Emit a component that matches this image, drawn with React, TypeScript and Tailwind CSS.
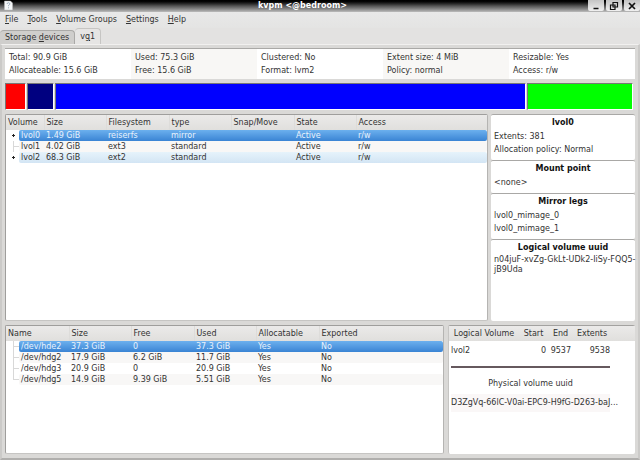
import type { ReactNode } from "react";

type TreeMark = "plus" | "tee" | "end" | "first";
type RowTone = "selected" | "hover" | "plain" | "tint";

interface TreeRow {
  mark: TreeMark;
  tone: RowTone;
  cells: string[];
}

const MENUS = [
  { key: "F", rest: "ile" },
  { key: "T", rest: "ools" },
  { key: "V", rest: "olume Groups" },
  { key: "S", rest: "ettings" },
  { key: "H", rest: "elp" },
];

const SUMMARY = [
  ["Total: 90.9 GiB", "Allocateable: 15.6 GiB"],
  ["Used: 75.3 GiB", "Free: 15.6 GiB"],
  ["Clustered: No", "Format: lvm2"],
  ["Extent size: 4 MiB", "Policy: normal"],
  ["Resizable: Yes", "Access: r/w"],
];

const SEGMENTS = [
  { label: "lvol0", size: 19, color: "bg-[#ff0000]" },
  { label: "lvol1", size: 25, color: "bg-[#000080]" },
  { label: "lvol2", size: 471, color: "bg-[#0000ff]" },
  { label: "free", size: 105, color: "bg-[#00ff00]" },
];

const VOLUME_COLUMNS = ["Volume", "Size", "Filesystem", "type", "Snap/Move", "State", "Access"];

const VOLUMES: TreeRow[] = [
  { mark: "plus", tone: "selected", cells: ["lvol0", "1.49 GiB", "reiserfs", "mirror", "", "Active", "r/w"] },
  { mark: "tee", tone: "tint", cells: ["lvol1", "4.02 GiB", "ext3", "standard", "", "Active", "r/w"] },
  { mark: "plus", tone: "hover", cells: ["lvol2", "68.3 GiB", "ext2", "standard", "", "Active", "r/w"] },
];

const DEVICE_COLUMNS = ["Name", "Size", "Free", "Used", "Allocatable", "Exported"];

const DEVICES: TreeRow[] = [
  { mark: "first", tone: "selected", cells: ["/dev/hde2", "37.3 GiB", "0", "37.3 GiB", "Yes", "No"] },
  { mark: "tee", tone: "tint", cells: ["/dev/hdg2", "17.9 GiB", "6.2 GiB", "11.7 GiB", "Yes", "No"] },
  { mark: "tee", tone: "plain", cells: ["/dev/hdg3", "20.9 GiB", "0", "20.9 GiB", "Yes", "No"] },
  { mark: "end", tone: "tint", cells: ["/dev/hdg5", "14.9 GiB", "9.39 GiB", "5.51 GiB", "Yes", "No"] },
];

function toneClass(tone: RowTone): string {
  switch (tone) {
    case "selected":
      return "bg-linear-to-b from-[#6cb0ee] to-[#3a84d4] text-[#e8f2fc]";
    case "hover":
      return "bg-linear-to-b from-[#e6f3fb] to-[#d3e5f4]";
    case "tint":
      return "bg-[#f8f7f6]";
    default:
      return "bg-white";
  }
}

function TreeBranch({ mark }: { mark: TreeMark }) {
  if (mark === "plus") {
    return (
      <button type="button" aria-label="Expand" className="h-[11px] w-[13px] shrink-0">
        <svg viewBox="0 0 13 11" className="h-[11px] w-[13px]" fill="#222" shapeRendering="crispEdges">
          <rect x="6" y="5" width="3" height="1" />
          <rect x="7" y="4" width="1" height="3" />
        </svg>
      </button>
    );
  }
  return (
    <svg viewBox="0 0 13 11" className="h-[11px] w-[13px] shrink-0" shapeRendering="crispEdges">
      <path
        d={mark === "end" ? "M7.5 0v6M7.5 5.5h5" : "M7.5 0v11M7.5 5.5h5"}
        stroke="#d8d8d8"
        strokeWidth="1"
        fill="none"
      />
    </svg>
  );
}

function TreeTable({
  label,
  columns,
  widths,
  rows,
}: {
  label: string;
  columns: string[];
  widths: string[];
  rows: TreeRow[];
}) {
  return (
    <table aria-label={label} className="w-full table-fixed border-collapse">
      <colgroup>
        {columns.map((column, i) => (
          <col key={column} className={widths[i]} />
        ))}
      </colgroup>
      <thead>
        <tr className="h-[15px] bg-linear-to-b from-[#ebeae9] to-[#e0dfdd]">
          {columns.map((column) => (
            <th key={column} className="border-r border-[#dddcda] px-0.5 text-left font-normal whitespace-nowrap last:border-r-0">
              {column}
            </th>
          ))}
        </tr>
      </thead>
      <tbody>
        {rows.map((row) => (
          <tr key={row.cells[0]} className="h-[11px]">
            {row.cells.map((cell, i) =>
              i === 0 ? (
                <td key={i} className="p-0">
                  <div className="flex">
                    <TreeBranch mark={row.mark} />
                    <span className={`grow rounded-l-xs pl-0.5 whitespace-nowrap ${toneClass(row.tone)}`}>{cell}</span>
                  </div>
                </td>
              ) : (
                <td key={i} className={`px-0.5 py-0 whitespace-nowrap last:rounded-r-xs ${toneClass(row.tone)}`}>
                  {cell}
                </td>
              ),
            )}
          </tr>
        ))}
      </tbody>
    </table>
  );
}

function InfoSection({ title, grow, children }: { title: string; grow?: boolean; children: ReactNode }) {
  return (
    <section
      className={`rounded-xs border-t border-[#a9a8a6] bg-white px-[3px] pb-1 ${grow ? "grow" : ""}`}
    >
      <h2 className="text-center leading-[15px] font-bold text-[#111]">{title}</h2>
      {children}
    </section>
  );
}

function WindowButton({ label, children }: { label: string; children: ReactNode }) {
  return (
    <button
      type="button"
      aria-label={label}
      className="flex h-[11px] w-4 items-center justify-center rounded-b-xs bg-linear-to-b from-[#c4c4c4] to-[#f0f0f0]"
    >
      <svg viewBox="0 0 10 10" className="size-2.5" fill="none" stroke="#111">
        {children}
      </svg>
    </button>
  );
}

function TitleBar() {
  return (
    <header className="flex h-3 items-start bg-linear-to-b from-black via-[#555] to-[#bcbcbc] pl-1">
      <svg viewBox="0 0 9 11" className="h-[11px] w-[9px]">
        <path d="M.5 1h6l2 2v7h-8z" fill="#f4f6f8" stroke="#bbb" strokeWidth=".5" />
        <path d="M3 4q.2-1.300 1.500-1.300t1.400 1.200q0 .7-1.400 1.500v.8M4.500 7.300v1" fill="none" stroke="#8a9db0" strokeWidth=".8" />
      </svg>
      <h1 className="grow pl-1 text-center text-[8px] leading-[11px] font-bold text-white">kvpm &lt;@bedroom&gt;</h1>
      <div className="flex gap-0.5">
        <WindowButton label="Minimize">
          <path d="M2.500 7.500h5" strokeWidth="1.500" />
        </WindowButton>
        <WindowButton label="Restore">
          <path d="M4 1.500h4.500v4.500h-4.500zM1.500 4h4.500v4.500h-4.500z" strokeWidth="1.200" />
        </WindowButton>
        <WindowButton label="Close">
          <path d="M2 2l6 6M8 2l-6 6" strokeWidth="1.700" />
        </WindowButton>
      </div>
    </header>
  );
}

function SegmentTable() {
  return (
    <aside className="w-[187px] shrink-0 rounded-xs border-t border-l border-[#a3a2a0] border-l-[#c6c5c3] bg-white">
      <div className="bg-linear-to-b from-[#ebeae9] from-0% via-[#e0dfdd] via-[15px] to-white to-[15px]">
        <table aria-label="Segments" className="w-[162px] table-fixed border-collapse">
          <colgroup>
            <col />
            <col className="w-[29px]" />
            <col className="w-[25px]" />
            <col className="w-[38px]" />
          </colgroup>
          <thead>
            <tr className="h-[15px]">
              <th className="p-0 text-center font-normal whitespace-nowrap">Logical Volume</th>
              <th className="p-0 text-center font-normal">Start</th>
              <th className="p-0 text-center font-normal">End</th>
              <th className="p-0 text-center font-normal">Extents</th>
            </tr>
          </thead>
          <tbody>
            <tr className="h-[18px]">
              <td className="py-0 pl-0.5">lvol2</td>
              <td className="py-0 pr-0.5 text-right">0</td>
              <td className="py-0 pr-0.5 text-right">9537</td>
              <td className="py-0 pr-px text-right">9538</td>
            </tr>
          </tbody>
        </table>
      </div>
      <div className="flex w-[162px] flex-col pr-px pl-0.5">
        <hr className="mt-[7px] mb-2.5 h-0.5 border-0 bg-[#66595e]" />
        <h2 className="text-center leading-3">Physical volume uuid</h2>
        <p className="mt-1 bg-[#faf7f7] leading-[18px] whitespace-nowrap">D3ZgVq-66lC-V0ai-EPC9-H9fG-D263-baJ...</p>
      </div>
    </aside>
  );
}

export default function App() {
  return (
    <div className="flex min-h-screen flex-col bg-[#dad9d7] font-['DejaVu_Sans',sans-serif] text-[8px] leading-[11px] text-[#333]">
      <TitleBar />

      <nav aria-label="Menu" className="flex gap-[9px] bg-linear-to-b from-[#e8e8e8] to-[#e4e4e3] px-[5px] pt-0.5 pb-[3px]">
        {MENUS.map((menu) => (
          <button key={menu.key} type="button">
            <u>{menu.key}</u>
            {menu.rest}
          </button>
        ))}
      </nav>

      <div role="tablist" className="flex h-4 items-end bg-[#e3e2e1]">
        <button
          type="button"
          role="tab"
          aria-selected="false"
          className="h-3.5 rounded-t-sm border-t border-r border-[#aaa9a7] bg-[#cfcecc] pr-[5px] pl-[5px]"
        >
          Storage <u>d</u>evices
        </button>
        <button
          type="button"
          role="tab"
          aria-selected="true"
          className="h-4 rounded-t-sm border-t border-r border-[#c6c5c3] bg-[#e6e5e4] px-[5px]"
        >
          v<u>g</u>1
        </button>
      </div>

      <main className="flex grow flex-col gap-1 border-t border-r-2 border-b-2 border-l-2 border-[#f1f0ef] border-r-[#cbcac8] border-b-[#b0afad] border-l-[#cbcac8] px-[3px] pt-[3px] pb-1">
        <section className="flex border-t border-[#a9a8a6] bg-white">
          {SUMMARY.map((group) => (
            <div key={group[0]} className="flex-1 py-0.5 pl-1 leading-[13px] whitespace-nowrap even:bg-[#f8f7f5]">
              {group.map((line) => (
                <p key={line}>{line}</p>
              ))}
            </div>
          ))}
        </section>

        <section aria-label="Volume group usage" className="flex h-[27px] gap-px pr-0.5">
          {SEGMENTS.map((segment) => (
            <div
              key={segment.label}
              title={segment.label}
              style={{ flexGrow: segment.size }}
              className={`basis-0 border border-[#777] border-r-white border-b-white ${segment.color}`}
            />
          ))}
        </section>

        <section className="flex grow-[206] basis-0 gap-[3px]">
          <div className="grow rounded-xs border border-[#9f9e9c] border-r-[#b5b4b2] border-b-[#c6c5c3] bg-white">
            <TreeTable
              label="Logical volumes"
              columns={VOLUME_COLUMNS}
              widths={["w-[38px]", "w-[62px]", "w-[63px]", "w-[62px]", "w-[63px]", "w-[62px]", "w-auto"]}
              rows={VOLUMES}
            />
          </div>
          <aside className="flex w-36 shrink-0 flex-col">
            <InfoSection title="lvol0">
              <p className="leading-[13px]">Extents: 381</p>
              <p className="leading-[13px]">Allocation policy: Normal</p>
            </InfoSection>
            <InfoSection title="Mount point">
              <p className="leading-[13px]">&lt;none&gt;</p>
            </InfoSection>
            <InfoSection title="Mirror legs">
              <p className="leading-[13px]">lvol0_mimage_0</p>
              <p className="leading-[13px]">lvol0_mimage_1</p>
            </InfoSection>
            <InfoSection title="Logical volume uuid" grow>
              <p className="leading-[10px] whitespace-nowrap">
                n04juF-xvZg-GkLt-UDk2-IiSy-FQQ5-
                <br />
                jB9Uda
              </p>
            </InfoSection>
          </aside>
        </section>

        <section className="flex grow-[128] basis-0 gap-1">
          <div className="grow rounded-xs border border-[#9f9e9c] border-r-[#b5b4b2] border-b-[#c6c5c3] bg-white">
            <TreeTable
              label="Physical volumes"
              columns={DEVICE_COLUMNS}
              widths={["w-[63px]", "w-[62px]", "w-[63px]", "w-[62px]", "w-[63px]", "w-auto"]}
              rows={DEVICES}
            />
          </div>
          <SegmentTable />
        </section>
      </main>
    </div>
  );
}
